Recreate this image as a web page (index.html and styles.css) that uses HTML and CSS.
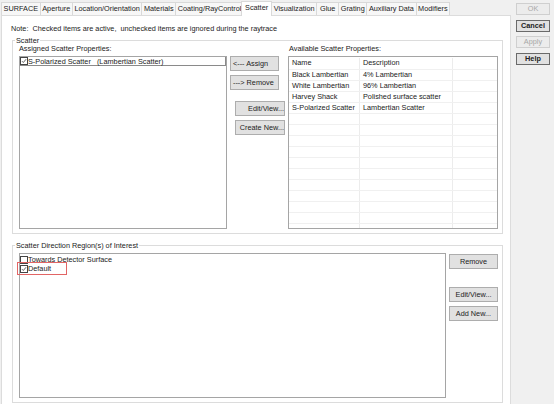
FILE: index.html
```html
<!DOCTYPE html>
<html>
<head>
<meta charset="utf-8">
<title>Surface Properties</title>
<link rel="stylesheet" href="styles.css">
</head>
<body>
<div class="window">
  <div class="main">
    <div class="tabs">
      <div class="tab">SURFACE</div>
      <div class="tab">Aperture</div>
      <div class="tab">Location/Orientation</div>
      <div class="tab">Materials</div>
      <div class="tab">Coating/RayControl</div>
      <div class="tab active">Scatter</div>
      <div class="tab">Visualization</div>
      <div class="tab">Glue</div>
      <div class="tab">Grating</div>
      <div class="tab">Auxiliary Data</div>
      <div class="tab">Modifiers</div>
    </div>
    <div class="panel">
      <p class="note">Note:&nbsp; Checked items are active,&nbsp; unchecked items are ignored during the raytrace</p>

      <fieldset class="group">
        <legend>Scatter</legend>
        <div class="scatter-grid">
          <div class="label">Assigned Scatter Properties:</div>
          <div class="label avail-label">Available Scatter Properties:</div>

          <div class="listbox assigned">
            <div class="item focused">
              <span class="check"><svg viewBox="0 0 8 8"><path d="M1.3 4.2 L3.1 6 L6.8 1.6" /></svg></span>S-Polarized Scatter&nbsp;&nbsp; (Lambertian Scatter)
            </div>
          </div>

          <div class="btn-col">
            <button class="btn btn-left">&lt;--- Assign</button>
            <button class="btn btn-left gap-s">---&gt; Remove</button>
            <button class="btn btn-right gap-l">Edit/View...</button>
            <button class="btn btn-right gap-s">Create New...</button>
          </div>

          <div class="table">
            <div class="row head"><div class="cell">Name</div><div class="cell">Description</div><div class="cell"></div></div>
            <div class="row"><div class="cell">Black Lambertian</div><div class="cell">4% Lambertian</div><div class="cell"></div></div>
            <div class="row"><div class="cell">White Lambertian</div><div class="cell">96% Lambertian</div><div class="cell"></div></div>
            <div class="row"><div class="cell">Harvey Shack</div><div class="cell">Polished surface scatter</div><div class="cell"></div></div>
            <div class="row"><div class="cell">S-Polarized Scatter</div><div class="cell">Lambertian Scatter</div><div class="cell"></div></div>
            <div class="row"><div class="cell"></div><div class="cell"></div><div class="cell"></div></div>
            <div class="row"><div class="cell"></div><div class="cell"></div><div class="cell"></div></div>
            <div class="row"><div class="cell"></div><div class="cell"></div><div class="cell"></div></div>
            <div class="row"><div class="cell"></div><div class="cell"></div><div class="cell"></div></div>
            <div class="row"><div class="cell"></div><div class="cell"></div><div class="cell"></div></div>
            <div class="row"><div class="cell"></div><div class="cell"></div><div class="cell"></div></div>
            <div class="row"><div class="cell"></div><div class="cell"></div><div class="cell"></div></div>
            <div class="row"><div class="cell"></div><div class="cell"></div><div class="cell"></div></div>
            <div class="row"><div class="cell"></div><div class="cell"></div><div class="cell"></div></div>
            <div class="row"><div class="cell"></div><div class="cell"></div><div class="cell"></div></div>
            <div class="row"><div class="cell"></div><div class="cell"></div><div class="cell"></div></div>
          </div>
        </div>
      </fieldset>

      <fieldset class="group region">
        <legend>Scatter Direction Region(s) of Interest</legend>
        <div class="region-row">
          <div class="listbox regions">
            <div class="item">
              <span class="check"></span>Towards Detector Surface
            </div>
            <div class="item">
              <span class="check"><svg viewBox="0 0 8 8"><path d="M1.3 4.2 L3.1 6 L6.8 1.6" /></svg></span>Default
            </div>
            <div class="mark"></div>
          </div>
          <div class="btn-col region-btns">
            <button class="btn">Remove</button>
            <button class="btn gap-xl">Edit/View...</button>
            <button class="btn gap-s">Add New...</button>
          </div>
        </div>
      </fieldset>
    </div>
  </div>

  <div class="side">
    <button class="side-btn disabled">OK</button>
    <button class="side-btn strong">Cancel</button>
    <button class="side-btn disabled">Apply</button>
    <button class="side-btn strong">Help</button>
  </div>
</div>
</body>
</html>
```
FILE: styles.css
```css
html, body {
  margin: 0;
  padding: 0;
}

body {
  background: #f0f0f0;
  font-family: "Liberation Sans", Arial, sans-serif;
  font-size: 7.3px;
  color: #222;
}

.window {
  display: flex;
  width: 554px;
  height: 404px;
  overflow: hidden;
}

/* ---- tabbed area ---- */
.main {
  width: 510px;
  margin-left: 1px;
  display: flex;
  flex-direction: column;
}

.tabs {
  display: flex;
  align-items: flex-end;
  height: 15px;
  flex-shrink: 0;
}

.tab {
  box-sizing: border-box;
  height: 13px;
  line-height: 12px;
  padding: 0 1.6px;
  min-width: 23px;
  text-align: center;
  white-space: nowrap;
  background: #f7f7f7;
  border: 1px solid #d9d9d9;
  border-bottom: none;
  margin-right: -1px;
}

.tab.active {
  position: relative;
  z-index: 1;
  height: 15px;
  line-height: 11px;
  margin: 0 -1px -1px -2px;
  padding: 0 3px;
  background: #fff;
}

.panel {
  flex: 1;
  background: #fff;
  border: 1px solid #dcdcdc;
  border-bottom: none;
  padding: 8px 7px 0 10px;
}

.note {
  margin: 0 0 0 -1px;
  line-height: 9px;
  white-space: nowrap;
}

/* ---- group boxes ---- */
.group {
  box-sizing: border-box;
  width: 491px;
  min-width: 0;
  margin: 3px 0 0;
  padding: 0 4px 4px 6px;
  border: 1px solid #dcdcdc;
}

.group legend {
  padding: 0 1px;
  margin-left: -4px;
  line-height: 9px;
}

.group.region {
  margin-top: 7px;
  padding-top: 3px;
}

.scatter-grid {
  display: grid;
  grid-template-columns: 208px 61px 210px;
  grid-template-rows: 11px 173px;
}

.label {
  line-height: 8px;
  white-space: nowrap;
}

.avail-label {
  grid-column: 3;
  padding-left: 1px;
}

.listbox {
  position: relative;
  box-sizing: border-box;
  background: #fff;
  border: 1px solid #a5a5a5;
}

.assigned {
  grid-column: 1;
  grid-row: 2;
}

.item {
  display: flex;
  align-items: center;
  height: 9px;
  line-height: 9px;
  white-space: nowrap;
}

.item.focused {
  box-sizing: border-box;
  height: 9px;
  border-bottom: 1px solid #8a8a8a;
  border-right: 1px solid #8a8a8a;
}

.check {
  box-sizing: border-box;
  width: 8px;
  height: 8px;
  border: 1px solid #444;
  background: #fff;
  flex-shrink: 0;
}

.check svg {
  display: block;
  width: 6px;
  height: 6px;
  fill: none;
  stroke: #333;
  stroke-width: 1;
}

/* ---- push buttons ---- */
.btn-col {
  grid-column: 2;
  grid-row: 2;
  display: flex;
  flex-direction: column;
  align-items: flex-start;
}

.btn {
  box-sizing: border-box;
  height: 15px;
  width: 49px;
  margin: 0 0 0 3px;
  padding: 0 2px;
  font: inherit;
  color: #222;
  line-height: 13px;
  white-space: nowrap;
  overflow: hidden;
  background: #e1e1e1;
  border: 1px solid #adadad;
  border-radius: 0;
}

.btn-left {
  text-align: left;
}

.btn-right {
  width: 50px;
  margin-left: 8px;
  text-align: right;
  padding: 0 0 0 2px;
}

.gap-s {
  margin-top: 4px;
}

.gap-l {
  margin-top: 11px;
}

.gap-xl {
  margin-top: 18px;
}

/* ---- available properties list view ---- */
.table {
  grid-column: 3;
  grid-row: 2;
  box-sizing: border-box;
  background: #fff;
  border: 1px solid #a5a5a5;
  overflow: hidden;
}

.row {
  display: grid;
  grid-template-columns: 71px 93px 1fr;
  box-sizing: border-box;
  height: 11px;
  border-bottom: 1px solid #f0f0f0;
}

.row.head {
  height: 13px;
  padding-top: 1px;
}

.cell {
  box-sizing: border-box;
  padding-left: 3px;
  line-height: 10px;
  white-space: nowrap;
  border-right: 1px solid #ececec;
}

.cell:last-child {
  border-right: none;
}

/* ---- region list ---- */
.region-row {
  display: flex;
}

.regions {
  width: 427px;
  height: 145px;
  padding-top: 1px;
}

.mark {
  position: absolute;
  left: -3px;
  top: 8px;
  width: 50px;
  height: 13px;
  box-sizing: border-box;
  border: 1.5px solid #e26565;
}

.region-btns {
  align-items: stretch;
}

.region-btns .btn {
  width: 49px;
  text-align: center;
}

.region-btns .btn:first-child {
  margin-top: 1px;
}

/* ---- dialog buttons ---- */
.side {
  flex: 1;
  display: flex;
  flex-direction: column;
  align-items: flex-start;
  gap: 4.5px;
  padding: 3px 0 0 5px;
}

.side-btn {
  box-sizing: border-box;
  width: 34px;
  height: 12px;
  padding: 0;
  font: inherit;
  font-size: 7.3px;
  line-height: 10px;
  text-align: center;
  color: #222;
  background: #e1e1e1;
  border: 1px solid #adadad;
  border-radius: 0;
}

.side-btn.strong {
  font-weight: bold;
  border-color: #6a6a6a;
}

.side-btn.disabled {
  color: #a8a8a8;
  background: #ececec;
  border-color: #cfcfcf;
}
```
